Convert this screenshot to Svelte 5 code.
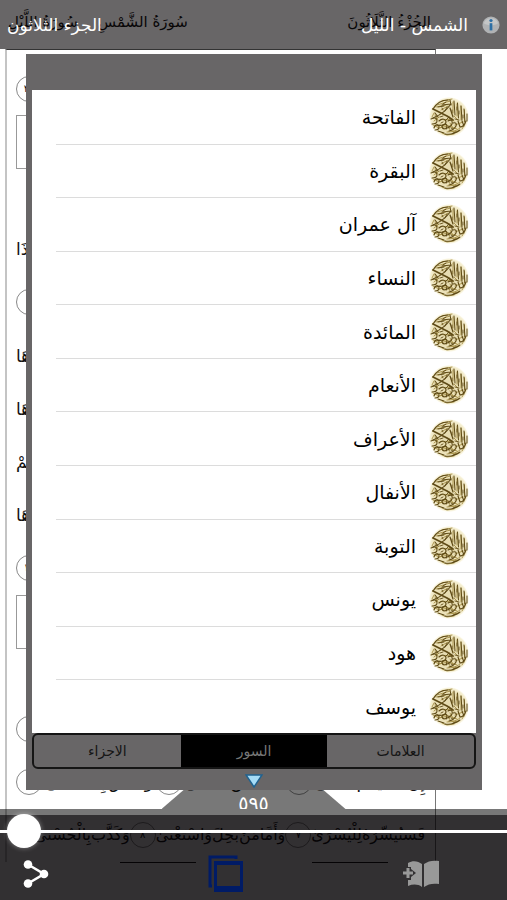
<script>
	const surahs = ['الفاتحة', 'البقرة', 'آل عمران', 'النساء', 'المائدة', 'الأنعام', 'الأعراف', 'الأنفال', 'التوبة', 'يونس', 'هود', 'يوسف'];

	const tabs = ['العلامات', 'السور', 'الاجزاء'];

	// '#' starts a surah banner, '*' is a centred line
	const lines = [
		'هُمْ أَصْحَابُ الْمَشْأَمَةِ ١٩ عَلَيْهِمْ نَارٌ مُؤْصَدَةٌ ٢٠',
		'# سُورَةُ الشَّمْسِ',
		'* بِسْمِ اللَّهِ الرَّحْمَٰنِ الرَّحِيمِ',
		'وَالشَّمْسِ وَضُحَاهَا ١ وَالْقَمَرِ إِذَا تَلَاهَا ٢ وَالنَّهَارِ إِذَا',
		'جَلَّاهَا ٣ وَاللَّيْلِ إِذَا يَغْشَاهَا ٤ وَالسَّمَاءِ وَمَا بَنَاهَا ٥',
		'وَمَا طَحَاهَا ٦ وَنَفْسٍ وَمَا سَوَّاهَا ٧ فَأَلْهَمَهَا فُجُورَهَا',
		'وَتَقْوَاهَا ٨ قَدْ أَفْلَحَ مَنْ زَكَّاهَا ٩ وَقَدْ خَابَ مَنْ دَسَّاهَا',
		'كَذَّبَتْ ثَمُودُ بِطَغْوَاهَا ١١ إِذِ انْبَعَثَ أَشْقَاهَا ١٢ فَقَالَ لَهُمْ',
		'رَسُولُ اللَّهِ نَاقَةَ اللَّهِ وَسُقْيَاهَا ١٣ فَكَذَّبُوهُ فَعَقَرُوهَا',
		'فَدَمْدَمَ عَلَيْهِمْ رَبُّهُمْ بِذَنْبِهِمْ ١٤ وَلَا يَخَافُ عُقْبَاهَا ١٥',
		'# سُورَةُ اللَّيْلِ',
		'* بِسْمِ اللَّهِ الرَّحْمَٰنِ الرَّحِيمِ',
		'وَاللَّيْلِ إِذَا يَغْشَىٰ ١ وَالنَّهَارِ إِذَا تَجَلَّىٰ ٢ وَمَا خَلَقَ ٣',
		'إِنَّ سَعْيَكُمْ لَشَتَّىٰ ٤ فَأَمَّا مَنْ أَعْطَىٰ ٥ وَصَدَّقَ بِالْحُسْنَىٰ ٦',
		'فَسَنُيَسِّرُهُ لِلْيُسْرَىٰ ٧ وَأَمَّا مَنْ بَخِلَ وَاسْتَغْنَىٰ ٨ وَكَذَّبَ بِالْحُسْنَىٰ'
	];

	let selected = $state(1);
	let page = $state(595);

	const arabic = (n) => String(n).replace(/\d/g, (d) => '٠١٢٣٤٥٦٧٨٩'[d]);
	const isNumber = (word) => /^[٠-٩]+$/.test(word);
</script>

{#snippet emblem()}
	<svg class="emblem" viewBox="0 0 40 40" aria-hidden="true">
		<circle cx="20" cy="20" r="20" fill="url(#gold)" />
		<g fill="none" stroke="#a58e45" stroke-width="0.900" stroke-linecap="round">
			<path d="M8 8l13-4M7 10l10-2M13 4l10-2M24 5v11M28 7v12M32 9v14M35.500 13v12M12 13l7-4M6 18l3 5M15 23l8-1M4 28l6 3 9-2 9 3" />
			<path d="M11 31c4-4 8-4 9 0s6 4 11 0M18 35l12-1M26 28l8-3M5 24l5-4M20 21l5 3M25 19l4 4" />
			<path d="M13 36l5 2 7-1M3 20l2-4M36 27l-3 5M21 26l3 5M8 29l3-1" />
		</g>
		<g fill="none" stroke="#5f4b16" stroke-linecap="round" stroke-linejoin="round">
			<path stroke-width="1.700" d="M4 12l8 4 6 3 6 4" />
			<path stroke-width="1.200" d="M4 12c3-5 8-9 15-9M22 7c-4 5-8 10-18 14M22 7l-9 1M21 11l3 9" />
			<path stroke-width="1" d="M25 4l1 14M28.500 6l1 15M32 9l1 14M35 12l1 13M38 17v7M21 3l1 5M9 10l6-1M17 5l-3 2" />
			<path stroke-width="1.100" d="M2 22c4-2 6-1 6 2s-3 3-5 3M6 16l3 4M10 24c3-3 7-2 7 1s-5 4-9 3M19 24c3-2 5 0 4 3s-4 3-6 5" />
			<path stroke-width="1.100" d="M5 31c1-4 5-4 5-1s-2 3-4 3M13 30c0-3 5-4 5-1s-4 4-5 1M24 26c3-1 4 1 3 3s-3 4-7 5M29 24l2 6c3 0 5-3 6-6M33 24l2 5M16 37c6 1 11-1 15-4M9 34l6 2" />
			<path stroke-width="0.900" d="M14 13l-1-2M18 10l-2 4M17 23l3-3M26 22l4 1M11 20l3-1M12 26l2-1M22 31l2 1M24 36l3-1M20 29v2M28 10v3M30 14v3M34 18v3M23 13v3" />
		</g>
	</svg>
{/snippet}

<svelte:head>
	<title>القرآن الكريم</title>
</svelte:head>

<svg class="defs" aria-hidden="true">
	<defs>
		<radialGradient id="gold">
			<stop offset="0" stop-color="#e4d9ae" />
			<stop offset="0.75" stop-color="#ece2b9" />
			<stop offset="0.92" stop-color="#f5efd2" />
			<stop offset="1" stop-color="#fffefa" />
		</radialGradient>
	</defs>
</svg>

<div class="app" dir="rtl">
	<div class="mushaf">
		<div class="running">
			<span>الجُزْءُ الثَّلَاثُونَ</span>
			<span class="names"><span>سُورَةُ الشَّمْسِ</span><span>سُورَةُ اللَّيْلِ</span></span>
		</div>
		<div class="frame">
			{#each lines as line}
				<div class="line">
					{#if line[0] === '#'}
						<span class="banner">{line.slice(2)}</span>
					{:else if line[0] === '*'}
						<span class="centred">{line.slice(2)}</span>
					{:else}
						{#each line.split(' ') as word}
							<span class:verse={isNumber(word)}>{word}</span>
						{/each}
					{/if}
				</div>
			{/each}
		</div>
		<div class="rules"><span></span><span></span></div>
	</div>

	<header>
		<button class="info" aria-label="معلومات">
			<svg viewBox="0 0 20 20" width="18" height="18">
				<circle cx="10" cy="10" r="9.500" fill="#b0b2b4" />
				<path d="M2 8a8.500 8.500 0 0 1 16 0c-5 3-11 3-16 0z" fill="#c4c6c7" />
				<circle cx="10" cy="5" r="1.800" fill="#2d6fa5" />
				<path d="M8.500 8h3v8h-3z" fill="#2d6fa5" />
			</svg>
		</button>
		<h1>الشمس - الليل</h1>
		<span class="juz">الجزء الثلاثون</span>
	</header>

	<main>
		<ul>
			{#each surahs as name}
				<li>
					<button class="surah">
						{@render emblem()}
						<span class="name">{name}</span>
					</button>
				</li>
			{/each}
		</ul>
		<nav>
			{#each tabs as tab, i}
				<button class:active={i === selected} onclick={() => (selected = i)}>{tab}</button>
			{/each}
		</nav>
		<svg class="pointer" viewBox="0 0 18 14" aria-hidden="true">
			<path d="M1 1h16L9 13z" fill="#a5dcf7" stroke="#20628f" stroke-width="1.500" />
		</svg>
	</main>

	<footer>
		<div class="handle"><output for="page">{arabic(page)}</output></div>
		<div class="strip"></div>
		<div class="controls">
			<input id="page" type="range" min="1" max="604" bind:value={page} aria-label="الصفحة" />
			<div class="tools" dir="ltr">
				<button aria-label="مشاركة">
					<svg width="26" height="28" viewBox="0 0 26 28">
						<path d="M5 4.500L21 14 5 23.500" fill="none" stroke="#fff" stroke-width="2.600" />
						<g fill="#fff"><circle cx="5" cy="4.500" r="4.300" /><circle cx="21" cy="14" r="4.300" /><circle cx="5" cy="23.500" r="4.300" /></g>
					</svg>
				</button>
				<button aria-label="النوافذ">
					<svg width="36" height="38" viewBox="0 0 36 38">
						<path d="M4 31H2V2h26v2" fill="none" stroke="#001b66" stroke-width="3" />
						<path d="M6 6h29v31H6zM9 10v21h23V10z" fill="#001b66" fill-rule="evenodd" />
					</svg>
				</button>
				<button aria-label="إضافة علامة">
					<svg width="36" height="28" viewBox="0 0 36 28">
						<path d="M5 3c5-3 10-2 14 1v23c-4-3-9-3-14-1v-6h3v-3l5-4-5-4V7H5z" fill="#999" />
						<path d="M21 4c4-3 9-4 15-3v23c-6-1-11 0-15 3z" fill="#999" />
						<path d="M0 13h10M5 8v10" stroke="#999" stroke-width="3" />
					</svg>
				</button>
			</div>
		</div>
	</footer>
</div>

<style>
	:global(body) {
		margin: 0;
	}

	.defs {
		position: absolute;
		width: 0;
		height: 0;
	}

	.app {
		position: relative;
		display: flex;
		flex-direction: column;
		min-height: 100vh;
		overflow: hidden;
		background: #fff;
		font-family: "DejaVu Sans", sans-serif;
	}

	button {
		margin: 0;
		padding: 0;
		border: 0;
		background: none;
		color: inherit;
		font: inherit;
		cursor: pointer;
	}

	svg {
		display: block;
	}

	/* the page of the book lies under everything */
	.mushaf {
		position: absolute;
		inset: 0 14% 0 5px;
		display: flex;
		flex-direction: column;
		color: #111;
		font-size: 17px;
	}

	.running {
		display: flex;
		justify-content: space-between;
		height: 49px;
		padding: 0 5px 0 3px;
		line-height: 44px;
		font-size: 15px;
		white-space: nowrap;
	}

	.names {
		display: flex;
		gap: 20px;
	}

	.frame {
		flex: 1;
		display: flex;
		flex-direction: column;
		padding: 12px 10px 0 9px;
		border-top: 1px solid #333;
		border-left: 2px solid #c4c4c4;
		border-right: 1px solid #777;
	}

	.line {
		flex: 1;
		display: flex;
		align-items: center;
		justify-content: space-between;
		white-space: nowrap;
		line-height: 32px;
	}

	.line:last-child {
		padding-left: 20px;
		font-size: 16px;
	}

	.banner {
		flex: 1;
		border: 1px solid #999;
		line-height: 52px;
		text-align: center;
	}

	.centred {
		margin: 0 auto;
	}

	.verse {
		flex: none;
		width: 24px;
		height: 24px;
		border: 1px solid #888;
		border-radius: 50%;
		line-height: 24px;
		font-size: 10px;
		text-align: center;
	}

	.rules {
		display: flex;
		justify-content: space-between;
		height: 38px;
		padding: 0 48px 0 115px;
	}

	.rules span {
		width: 76px;
		border-top: 1px solid #111;
	}

	header {
		position: relative;
		display: flex;
		align-items: center;
		height: 49px;
		padding: 0 7px;
		background: rgba(4, 0, 2, 0.6);
		color: #fff;
		font-size: 17px;
	}

	h1 {
		margin: 0 14px 0 auto;
		font-size: 17px;
		font-weight: normal;
	}

	main {
		position: relative;
		flex: 1;
		display: flex;
		flex-direction: column;
		margin: 5px 25px 0 26px;
		padding: 36px 6px 21px;
		background: #686667;
	}

	ul {
		flex: 1;
		display: flex;
		flex-direction: column;
		margin: 0;
		padding: 1px 0 0;
		background: #fff;
		list-style: none;
	}

	li {
		flex: 1;
		display: flex;
		margin-left: 24px;
		border-bottom: 1px solid #dcdcdc;
	}

	li:last-child {
		border: 0;
	}

	.surah {
		flex: 1;
		display: flex;
		align-items: center;
		gap: 13px;
		padding: 0 7px;
		color: #000;
		font-size: 19px;
	}

	.emblem {
		width: 40px;
		height: 40px;
	}

	nav {
		display: flex;
		border: 2px solid #151515;
		border-radius: 6px;
		overflow: hidden;
	}

	nav button {
		flex: 1;
		height: 32px;
		color: #151515;
		font-size: 14px;
	}

	nav .active {
		background: #000;
		color: #777;
	}

	.pointer {
		position: absolute;
		bottom: 2px;
		left: 50%;
		width: 18px;
		margin-left: -9px;
	}

	footer {
		position: relative;
	}

	.handle {
		width: 184px;
		height: 19px;
		margin: 0 auto;
		background: rgba(0, 0, 0, 0.53);
		clip-path: polygon(12% 0, 88% 0, 100% 100%, 0 100%);
	}

	.strip {
		height: 6px;
		background: rgba(0, 0, 0, 0.53);
	}

	.handle output {
		display: block;
		color: #fff;
		font-size: 19px;
		line-height: 26px;
		text-align: center;
	}

	.controls {
		background: rgba(3, 0, 2, 0.81);
	}

	input {
		display: block;
		width: 100%;
		height: 32px;
		margin: 0;
		background: none;
		appearance: none;
	}

	input::-webkit-slider-runnable-track {
		height: 3px;
		background: #fff;
	}

	input::-webkit-slider-thumb {
		width: 34px;
		height: 34px;
		margin-top: -16px;
		border-radius: 50%;
		background: #fff;
		box-shadow: 0 0 5px rgba(255, 255, 255, 0.4);
		appearance: none;
	}

	.tools {
		display: flex;
		align-items: center;
		justify-content: space-between;
		height: 53px;
		padding: 0 68px 0 23px;
	}
</style>
